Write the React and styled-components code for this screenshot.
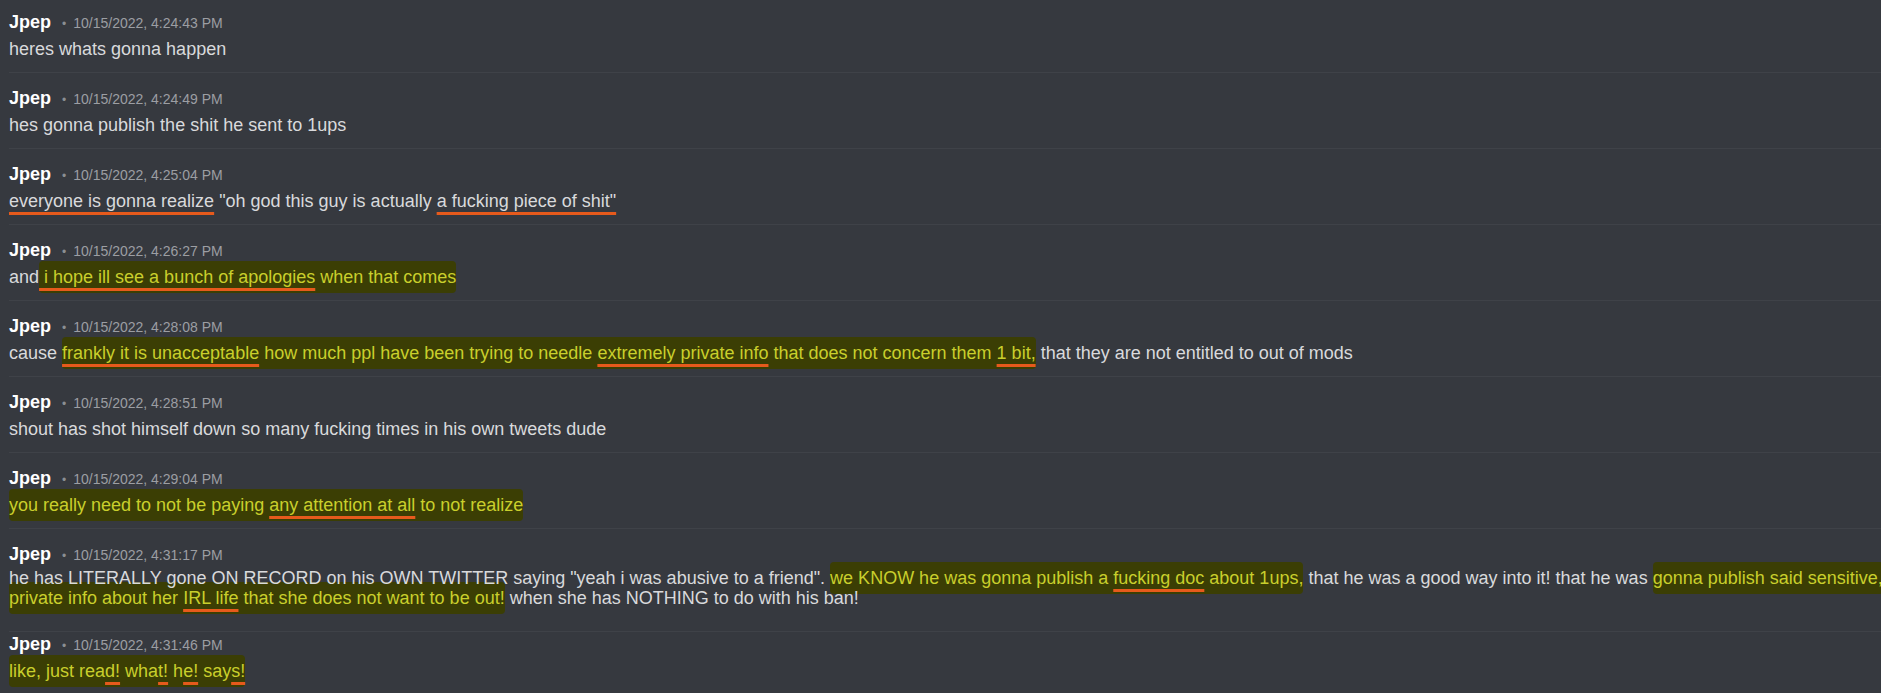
import React from "react";
import styled, { createGlobalStyle } from "styled-components";

const GlobalStyle = createGlobalStyle`
  html, body {
    margin: 0;
    padding: 0;
    background: #36393f;
    overflow: hidden;
  }
  body {
    font-family: "Liberation Sans", Arial, sans-serif;
  }
`;

// "plain" | { u: "..." } | { hl: [...] } | { br: true }
const messages = [
  { time: "10/15/2022, 4:24:43 PM", parts: ["heres whats gonna happen"] },
  { time: "10/15/2022, 4:24:49 PM", parts: ["hes gonna publish the shit he sent to 1ups"] },
  {
    time: "10/15/2022, 4:25:04 PM",
    parts: [
      { u: "everyone is gonna realize" },
      ' "oh god this guy is actually ',
      { u: 'a fucking piece of shit"' },
    ],
  },
  {
    time: "10/15/2022, 4:26:27 PM",
    parts: [
      "and",
      { hl: [{ u: " i hope ill see a bunch of apologies" }, " when that comes"] },
    ],
  },
  {
    time: "10/15/2022, 4:28:08 PM",
    parts: [
      "cause ",
      {
        hl: [
          { u: "frankly it is unacceptable" },
          " how much ppl have been trying to needle ",
          { u: "extremely private info" },
          " that does not concern them ",
          { u: "1 bit," },
        ],
      },
      " that they are not entitled to out of mods",
    ],
  },
  {
    time: "10/15/2022, 4:28:51 PM",
    parts: ["shout has shot himself down so many fucking times in his own tweets dude"],
  },
  {
    time: "10/15/2022, 4:29:04 PM",
    parts: [
      {
        hl: [
          "you really need to not be paying ",
          { u: "any attention at all" },
          " to not realize",
        ],
      },
    ],
  },
  {
    time: "10/15/2022, 4:31:17 PM",
    shift: -4,
    lines: 20,
    bottom: 23,
    parts: [
      'he has LITERALLY gone ON RECORD on his OWN TWITTER saying "yeah i was abusive to a friend". ',
      { hl: ["we KNOW he was gonna publish a ", { u: "fucking doc" }, " about 1ups,"] },
      " that he was a good way into it! that he was ",
      { hl: ["gonna publish said sensitive,"] },
      { br: true },
      {
        hl: [
          "private info about her ",
          { u: "IRL life" },
          " that she does not want to be out!",
        ],
      },
      " when she has NOTHING to do with his ban!",
    ],
  },
  {
    time: "10/15/2022, 4:31:46 PM",
    top: 1,
    parts: [
      {
        hl: [
          "like, just rea",
          { u: "d!" },
          " wha",
          { u: "t!" },
          " h",
          { u: "e!" },
          " say",
          { u: "s!" },
        ],
      },
    ],
  },
];

const Page = styled.div`
  display: flex;
  width: 100vw;
  height: 100vh;
  background: #36393f;
`;

const List = styled.div`
  flex: 1;
  padding: 0 5px 0 9px;
`;

const EdgeStrip = styled.div`
  width: 2px;
  background: #2b2d31;
`;

const Row = styled.div`
  padding-top: ${(p) => (p.$top != null ? p.$top : 14)}px;
  padding-bottom: ${(p) => (p.$bottom != null ? p.$bottom : 14)}px;
  border-bottom: 1px solid #3f4248;
  &:first-child {
    padding-top: 11px;
  }
  &:last-child {
    border-bottom: none;
  }
`;

const Header = styled.div`
  display: flex;
  align-items: baseline;
  height: 22px;
  line-height: 22px;
`;

const Author = styled.span`
  font-size: 18px;
  font-weight: 700;
  color: #ffffff;
`;

const Dot = styled.span`
  font-size: 12px;
  color: #8b8e93;
  margin: 0 7px 0 11px;
`;

const Time = styled.span`
  font-size: 14px;
  color: #9c9ea3;
`;

const Content = styled.div`
  position: relative;
  z-index: 0;
  margin-top: ${(p) => p.$shift || 0}px;
  padding-top: 7px;
  font-size: 18px;
  line-height: ${(p) => p.$lines || 18}px;
  color: #d9dadc;
  white-space: nowrap;
`;

/* marker stroke sits under the plain text of the line above */
const Highlight = styled.span`
  position: relative;
  z-index: -1;
  background: #3b3e04;
  color: #c9cf2c;
  padding: 6px 0 6px;
  box-decoration-break: clone;
  -webkit-box-decoration-break: clone;
  border-radius: 4px;
`;

const Mark = styled.span`
  text-decoration: underline;
  text-decoration-color: #e65a1c;
  text-decoration-thickness: 3px;
  text-underline-offset: 5px;
  text-decoration-skip-ink: none;
`;

const renderParts = (parts) =>
  parts.map((s, i) => {
    if (typeof s === "string") return <React.Fragment key={i}>{s}</React.Fragment>;
    if (s.br) return <br key={i} />;
    if (s.u) return <Mark key={i}>{s.u}</Mark>;
    return <Highlight key={i}>{renderParts(s.hl)}</Highlight>;
  });

export default function App() {
  return (
    <Page>
      <GlobalStyle />
      <List>
        {messages.map((m) => (
          <Row key={m.time} $top={m.top} $bottom={m.bottom}>
            <Header>
              <Author>Jpep</Author>
              <Dot>•</Dot>
              <Time>{m.time}</Time>
            </Header>
            <Content $shift={m.shift} $lines={m.lines}>
              {renderParts(m.parts)}
            </Content>
          </Row>
        ))}
      </List>
      <EdgeStrip />
    </Page>
  );
}
